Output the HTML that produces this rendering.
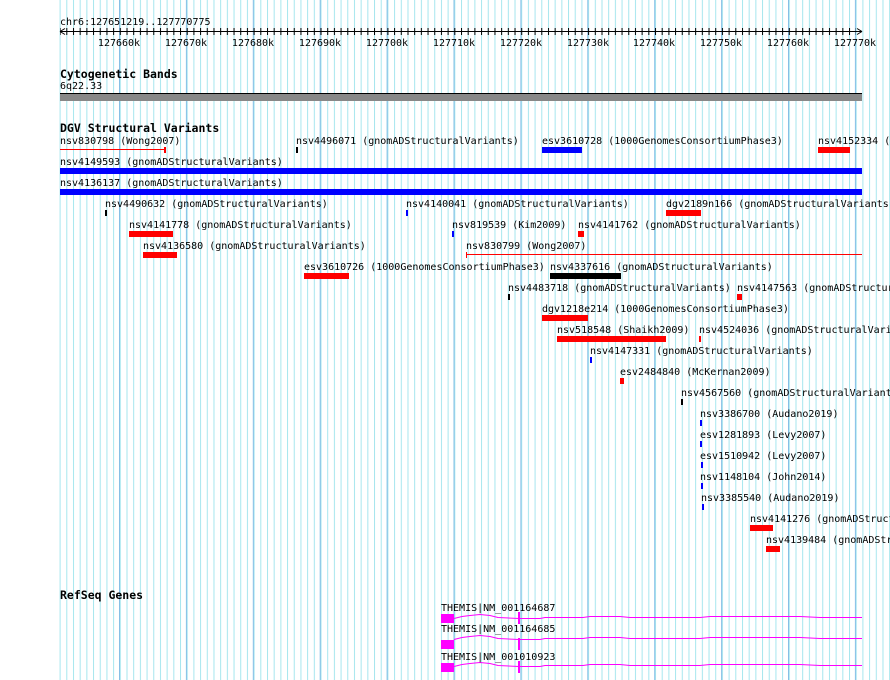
<!DOCTYPE html>
<html><head><meta charset="utf-8"><style>
html,body{margin:0;padding:0;background:#fff;width:890px;height:680px;overflow:hidden}
svg{display:block}
text{font-family:"DejaVu Sans Mono","Liberation Mono",monospace;font-size:10px;fill:#000}
.t{font-weight:bold;font-size:11.5px}
</style></head><body>
<svg width="890" height="680" viewBox="0 0 890 680" xmlns="http://www.w3.org/2000/svg">
<defs>
<pattern id="minor" x="59.6" y="0" width="6.69" height="680" patternUnits="userSpaceOnUse">
<rect x="0" y="0" width="1" height="680" fill="#a6e6ee"/>
</pattern>
<pattern id="major" x="119" y="0" width="66.9" height="680" patternUnits="userSpaceOnUse">
<rect x="0" y="0" width="1" height="680" fill="#86bfe6"/>
</pattern>
<pattern id="tick" x="59.6" y="0" width="6.69" height="680" patternUnits="userSpaceOnUse">
<rect x="0" y="0" width="1" height="680" fill="#000"/>
</pattern>
</defs>
<rect x="59" y="0" width="831" height="680" fill="url(#minor)"/>
<rect x="59" y="0" width="831" height="680" fill="url(#major)"/>

<!-- ruler -->
<text x="60" y="25">chr6:127651219..127770775</text>
<rect x="60" y="31" width="802" height="1" fill="#000"/>
<rect x="60" y="28" width="796" height="7" fill="url(#tick)"/>
<path d="M60 31.5 L65 28.5 M60 31.5 L65 34.5 M862 31.5 L857 28.5 M862 31.5 L857 34.5" stroke="#000" stroke-width="1" fill="none"/>
<g text-anchor="middle">
<text x="119" y="46">127660k</text><text x="186" y="46">127670k</text><text x="253" y="46">127680k</text><text x="320" y="46">127690k</text><text x="387" y="46">127700k</text><text x="454" y="46">127710k</text><text x="521" y="46">127720k</text><text x="588" y="46">127730k</text><text x="654" y="46">127740k</text><text x="721" y="46">127750k</text><text x="788" y="46">127760k</text><text x="855" y="46">127770k</text>
</g>

<!-- cytobands -->
<text class="t" x="60" y="78">Cytogenetic Bands</text>
<text x="60" y="89">6q22.33</text>
<rect x="60" y="93" width="802" height="1" fill="#000"/>
<rect x="60" y="94" width="802" height="7" fill="#888"/>

<!-- DGV -->
<text class="t" x="60" y="132">DGV Structural Variants</text>
<!-- row0 -->
<text x="60" y="144">nsv830798 (Wong2007)</text>
<rect x="60" y="149" width="105" height="1" fill="#f00"/><rect x="164" y="147" width="2" height="6" fill="#f00"/>
<text x="296" y="144">nsv4496071 (gnomADStructuralVariants)</text>
<rect x="296" y="147" width="2" height="6" fill="#000"/>
<text x="542" y="144">esv3610728 (1000GenomesConsortiumPhase3)</text>
<rect x="542" y="147" width="40" height="6" fill="#00f"/>
<text x="818" y="144">nsv4152334 (</text>
<rect x="818" y="147" width="32" height="6" fill="#f00"/>
<!-- row1 -->
<text x="60" y="165">nsv4149593 (gnomADStructuralVariants)</text>
<rect x="60" y="168" width="802" height="6" fill="#00f"/>
<!-- row2 -->
<text x="60" y="186">nsv4136137 (gnomADStructuralVariants)</text>
<rect x="60" y="189" width="802" height="6" fill="#00f"/>
<!-- row3 -->
<text x="105" y="207">nsv4490632 (gnomADStructuralVariants)</text>
<rect x="105" y="210" width="2" height="6" fill="#000"/>
<text x="406" y="207">nsv4140041 (gnomADStructuralVariants)</text>
<rect x="406" y="210" width="2" height="6" fill="#00f"/>
<text x="666" y="207">dgv2189n166 (gnomADStructuralVariants)</text>
<rect x="666" y="210" width="35" height="6" fill="#f00"/>
<!-- row4 -->
<text x="129" y="228">nsv4141778 (gnomADStructuralVariants)</text>
<rect x="129" y="231" width="44" height="6" fill="#f00"/>
<text x="452" y="228">nsv819539 (Kim2009)</text>
<rect x="452" y="231" width="2" height="6" fill="#00f"/>
<text x="578" y="228">nsv4141762 (gnomADStructuralVariants)</text>
<rect x="578" y="231" width="6" height="6" fill="#f00"/>
<!-- row5 -->
<text x="143" y="249">nsv4136580 (gnomADStructuralVariants)</text>
<rect x="143" y="252" width="34" height="6" fill="#f00"/>
<text x="466" y="249">nsv830799 (Wong2007)</text>
<rect x="466" y="254" width="396" height="1" fill="#f00"/><rect x="466" y="252" width="1" height="6" fill="#f00"/>
<!-- row6 -->
<text x="304" y="270">esv3610726 (1000GenomesConsortiumPhase3)</text>
<rect x="304" y="273" width="45" height="6" fill="#f00"/>
<text x="550" y="270">nsv4337616 (gnomADStructuralVariants)</text>
<rect x="550" y="273" width="71" height="6" fill="#000"/>
<!-- row7 -->
<text x="508" y="291">nsv4483718 (gnomADStructuralVariants)</text>
<rect x="508" y="294" width="2" height="6" fill="#000"/>
<text x="737" y="291">nsv4147563 (gnomADStructuralVariants)</text>
<rect x="737" y="294" width="5" height="6" fill="#f00"/>
<!-- row8 -->
<text x="542" y="312">dgv1218e214 (1000GenomesConsortiumPhase3)</text>
<rect x="542" y="315" width="46" height="6" fill="#f00"/>
<!-- row9 -->
<text x="557" y="333">nsv518548 (Shaikh2009)</text>
<rect x="557" y="336" width="109" height="6" fill="#f00"/>
<text x="699" y="333">nsv4524036 (gnomADStructuralVariants)</text>
<rect x="699" y="336" width="2" height="6" fill="#f00"/>
<!-- row10 -->
<text x="590" y="354">nsv4147331 (gnomADStructuralVariants)</text>
<rect x="590" y="357" width="2" height="6" fill="#00f"/>
<!-- row11 -->
<text x="620" y="375">esv2484840 (McKernan2009)</text>
<rect x="620" y="378" width="4" height="6" fill="#f00"/>
<!-- row12 -->
<text x="681" y="396">nsv4567560 (gnomADStructuralVariants)</text>
<rect x="681" y="399" width="2" height="6" fill="#000"/>
<!-- rows 13-17 -->
<text x="700" y="417">nsv3386700 (Audano2019)</text>
<rect x="700" y="420" width="2" height="6" fill="#00f"/>
<text x="700" y="438">esv1281893 (Levy2007)</text>
<rect x="700" y="441" width="2" height="6" fill="#00f"/>
<text x="700" y="459">esv1510942 (Levy2007)</text>
<rect x="701" y="462" width="2" height="6" fill="#00f"/>
<text x="700" y="480">nsv1148104 (John2014)</text>
<rect x="701" y="483" width="2" height="6" fill="#00f"/>
<text x="701" y="501">nsv3385540 (Audano2019)</text>
<rect x="702" y="504" width="2" height="6" fill="#00f"/>
<!-- row18/19 -->
<text x="750" y="522">nsv4141276 (gnomADStructuralVariants)</text>
<rect x="750" y="525" width="23" height="6" fill="#f00"/>
<text x="766" y="543">nsv4139484 (gnomADStructuralVariants)</text>
<rect x="766" y="546" width="14" height="6" fill="#f00"/>

<!-- RefSeq -->
<text class="t" x="60" y="599">RefSeq Genes</text>
<g fill="none" stroke="#f0f" stroke-width="1">
<polyline points="454,618.5 462,616.5 470,615.5 480,614.5 490,615.5 498,617.5 519,618.5 540,618.5 545,617.5 583,617.5 590,616.5 620,616.5 630,617.5 700,617.5 710,616.5 800,616.5 820,617.5 862,617.5"/>
<polyline points="454,639.5 462,637.5 470,636.5 480,635.5 490,636.5 498,638.5 519,639.5 540,639.5 545,638.5 583,638.5 590,637.5 620,637.5 630,638.5 700,638.5 710,637.5 800,637.5 820,638.5 862,638.5"/>
<polyline points="454,666.5 462,664.5 470,663.5 480,662.5 490,663.5 498,665.5 519,666.5 540,666.5 545,665.5 583,665.5 590,664.5 620,664.5 630,665.5 700,665.5 710,664.5 800,664.5 820,665.5 862,665.5"/>
</g>
<g fill="#f0f">
<text x="441" y="611">THEMIS|NM_001164687</text>
<rect x="441" y="614" width="13" height="9"/><rect x="518" y="612" width="2" height="12"/>
<text x="441" y="632">THEMIS|NM_001164685</text>
<rect x="441" y="640" width="13" height="9"/><rect x="518" y="638" width="2" height="12"/>
<text x="441" y="660">THEMIS|NM_001010923</text>
<rect x="441" y="663" width="13" height="9"/><rect x="518" y="661" width="2" height="12"/>
</g>
</svg>
</body></html>
